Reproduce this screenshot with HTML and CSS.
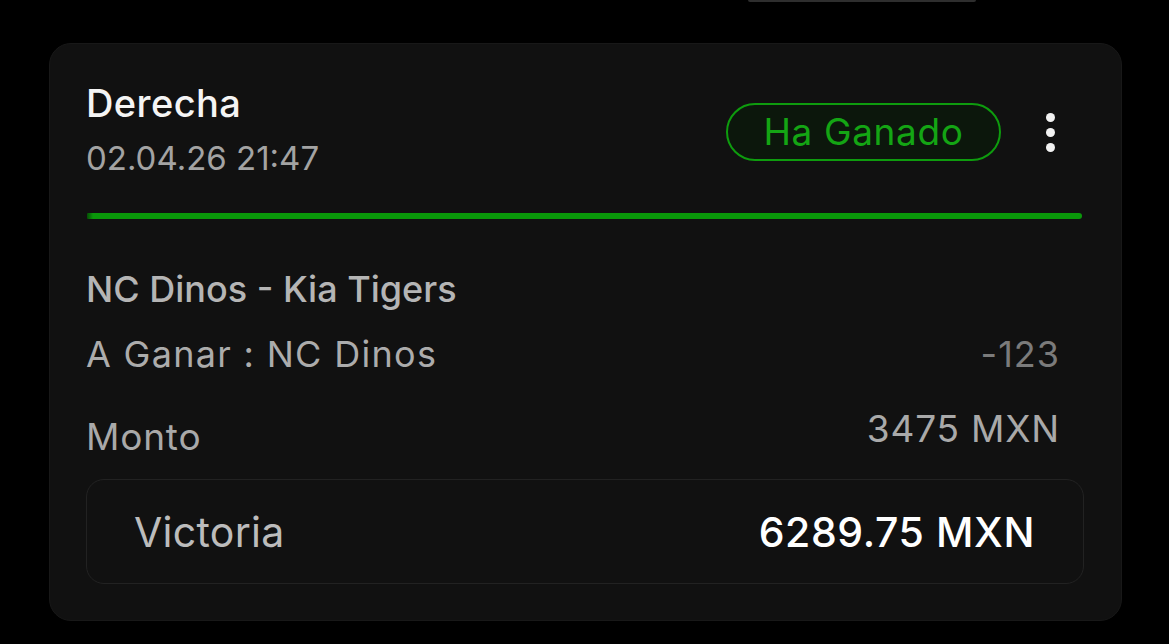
FILE: index.html
```html
<!DOCTYPE html>
<html lang="es">
<head>
<meta charset="utf-8">
<link rel="stylesheet" href="styles.css">
</head>
<body>
<div class="topbar"></div>
<div class="card">
  <div class="header">
    <div class="head-left">
      <div class="title">Derecha</div>
      <div class="date">02.04.26 21:47</div>
    </div>
    <div class="head-right">
      <div class="pill">Ha Ganado</div>
      <div class="kebab"><span></span><span></span><span></span></div>
    </div>
  </div>
  <div class="progress"></div>
  <div class="match">NC Dinos - Kia Tigers</div>
  <div class="row bet">
    <span class="bet-label">A Ganar : NC Dinos</span>
    <span class="odds">-123</span>
  </div>
  <div class="row amount">
    <span class="amount-label">Monto</span>
    <span class="amount-value">3475 MXN</span>
  </div>
  <div class="win-box">
    <span class="win-label">Victoria</span>
    <span class="win-value">6289.75 MXN</span>
  </div>
</div>
</body>
</html>
```
FILE: styles.css
```css
* { box-sizing: border-box; }
html, body { margin: 0; padding: 0; background: #000; }
body {
  width: 1169px;
  height: 644px;
  overflow: hidden;
  font-family: Inter, "Noto Sans", "Liberation Sans", sans-serif;
}
.topbar {
  margin-left: 748px;
  width: 228px;
  height: 2px;
  background: #2e2e2e;
  border-radius: 0 0 2px 2px;
}
.card {
  margin: 41px 0 0 49px;
  width: 1073px;
  background: #111111;
  border: 1px solid #181818;
  border-radius: 22px;
  padding: 36px 37px 36px 36px;
}
.header {
  display: flex;
  justify-content: space-between;
  align-items: flex-start;
}
.title {
  font-size: 38px;
  font-weight: 500;
  line-height: 46px;
  letter-spacing: 0.4px;
  color: #f4f4f4;
}
.date {
  margin-top: 12px;
  font-size: 33px;
  line-height: 40px;
  color: #a3a3a3;
}
.head-right {
  display: flex;
  align-items: center;
  gap: 15px;
  margin-top: 23px;
}
.pill {
  width: 275px;
  height: 58px;
  border: 2.5px solid #0e9c0e;
  border-radius: 29px;
  background: #0c170c;
  color: #14a514;
  font-size: 37px;
  letter-spacing: 0.6px;
  line-height: 53px;
  text-align: center;
}
.kebab {
  width: 68px;
  height: 58px;
  display: flex;
  flex-direction: column;
  align-items: center;
  justify-content: center;
  gap: 6px;
}
.kebab span {
  width: 9px;
  height: 9px;
  border-radius: 50%;
  background: #f2f2f2;
}
.progress {
  margin: 35px 2px 0 1px;
  height: 6px;
  border-radius: 1px 3px 3px 1px;
  background: linear-gradient(90deg, #064d06 0, #0a980a 6px, #0a980a 100%);
}
.match {
  margin-top: 48px;
  font-size: 36px;
  font-weight: 500;
  line-height: 44px;
  color: #b5b5b5;
}
.row {
  display: flex;
  justify-content: space-between;
  align-items: flex-start;
  padding-right: 24px;
}
.bet {
  margin-top: 21px;
  font-size: 36px;
  line-height: 44px;
  letter-spacing: 1.3px;
  color: #acacac;
}
.odds { color: #7b7b7b; letter-spacing: 1px; }
.amount {
  margin-top: 31px;
  font-size: 37px;
  line-height: 44px;
  letter-spacing: 0.8px;
  color: #a9a9a9;
}
.amount-label { margin-top: 8px; }
.win-box {
  margin-top: 20px;
  height: 105px;
  border: 1.5px solid #222222;
  border-radius: 18px;
  display: flex;
  justify-content: space-between;
  align-items: center;
  padding: 0 48px 0 47px;
  font-size: 41px;
  letter-spacing: 0.6px;
}
.win-label { color: #bcbcbc; letter-spacing: 0.3px; }
.win-value { color: #ffffff; font-weight: 500; }
```
